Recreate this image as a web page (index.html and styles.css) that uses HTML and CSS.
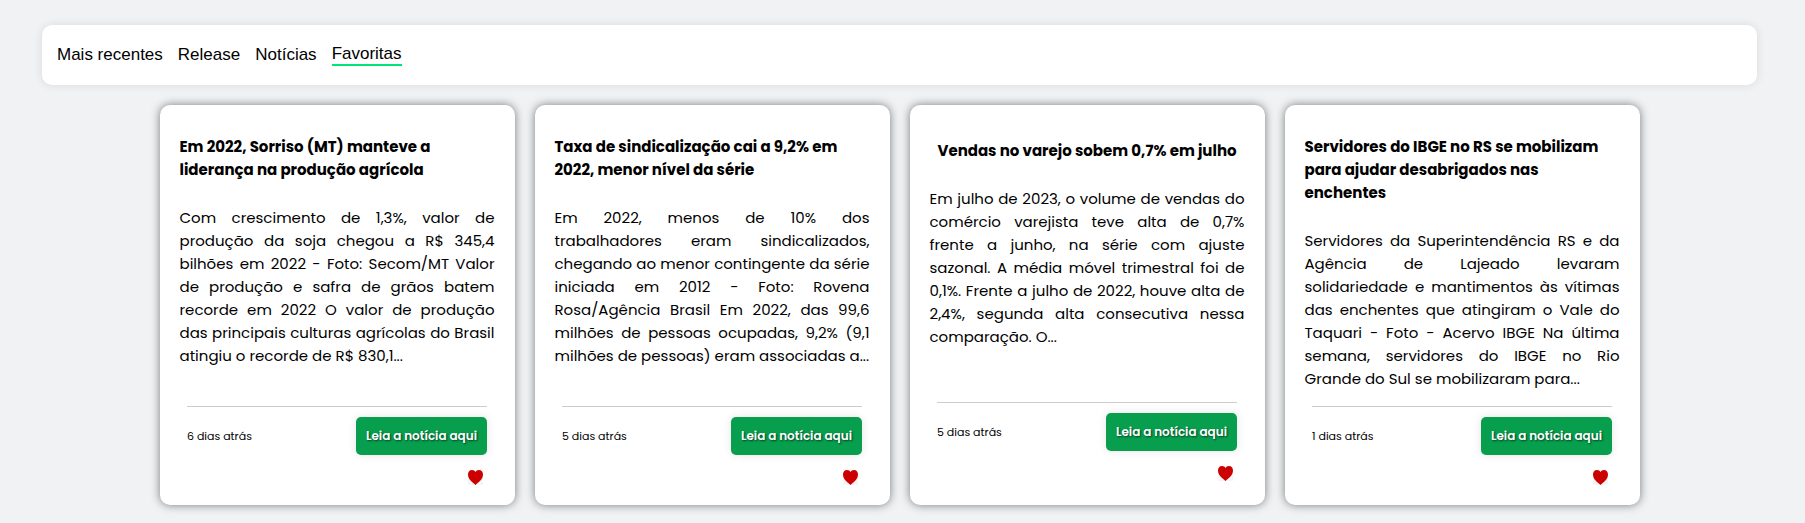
FILE: index.html
```html
<!DOCTYPE html>
<html lang="pt-BR">
<head>
<meta charset="utf-8">
<meta name="viewport" content="width=device-width, initial-scale=1">
<title>Notícias</title>
<link rel="stylesheet" href="styles.css">
</head>
<body>
<svg class="sprite" aria-hidden="true">
  <symbol id="heart" viewBox="0 0 15 15">
    <rect width="15" height="15" fill="#f5f5f5"/>
    <path fill="#c00" d="M7.5 15C5 12.600 0 9.500 0 4.500C0 1.800 1.700 0 4 0C5.600 0 6.900 .8 7.500 2C8.100 .8 9.400 0 11 0C13.300 0 15 1.800 15 4.500C15 9.500 10 12.600 7.500 15Z"/>
  </symbol>
</svg>
<nav class="tabs">
  <a class="tab" href="#">Mais recentes</a>
  <a class="tab" href="#">Release</a>
  <a class="tab" href="#">Notícias</a>
  <a class="tab tab-active" href="#" aria-current="page">Favoritas</a>
</nav>
<main class="cards">
  <article class="card">
    <h2 class="title">Em 2022, Sorriso (MT) manteve a liderança na produção agrícola</h2>
    <p class="text">Com crescimento de 1,3%, valor de produção da soja chegou a R$ 345,4 bilhões em 2022 - Foto: Secom/MT Valor de produção e safra de grãos batem recorde em 2022 O valor de produção das principais culturas agrícolas do Brasil atingiu o recorde de R$ 830,1...</p>
    <footer class="footer">
      <span class="date">6 dias atrás</span>
      <a class="read" href="#">Leia a notícia aqui</a>
      <button class="fav" type="button" aria-label="Remover dos favoritos"><svg class="heart"><use href="#heart"/></svg></button>
    </footer>
  </article>
  <article class="card">
    <h2 class="title">Taxa de sindicalização cai a 9,2% em 2022, menor nível da série</h2>
    <p class="text">Em 2022, menos de 10% dos trabalhadores eram sindicalizados, chegando ao menor contingente da série iniciada em 2012 - Foto: Rovena Rosa/Agência Brasil Em 2022, das 99,6 milhões de pessoas ocupadas, 9,2% (9,1 milhões de pessoas) eram associadas a...</p>
    <footer class="footer">
      <span class="date">5 dias atrás</span>
      <a class="read" href="#">Leia a notícia aqui</a>
      <button class="fav" type="button" aria-label="Remover dos favoritos"><svg class="heart"><use href="#heart"/></svg></button>
    </footer>
  </article>
  <article class="card card-short">
    <h2 class="title">Vendas no varejo sobem 0,7% em julho</h2>
    <p class="text">Em julho de 2023, o volume de vendas do comércio varejista teve alta de 0,7% frente a junho, na série com ajuste sazonal. A média móvel trimestral foi de 0,1%. Frente a julho de 2022, houve alta de 2,4%, segunda alta consecutiva nessa comparação. O...</p>
    <footer class="footer">
      <span class="date">5 dias atrás</span>
      <a class="read" href="#">Leia a notícia aqui</a>
      <button class="fav" type="button" aria-label="Remover dos favoritos"><svg class="heart"><use href="#heart"/></svg></button>
    </footer>
  </article>
  <article class="card">
    <h2 class="title">Servidores do IBGE no RS se mobilizam para ajudar desabrigados nas enchentes</h2>
    <p class="text">Servidores da Superintendência RS e da Agência de Lajeado levaram solidariedade e mantimentos às vítimas das enchentes que atingiram o Vale do Taquari - Foto - Acervo IBGE Na última semana, servidores do IBGE no Rio Grande do Sul se mobilizaram para...</p>
    <footer class="footer">
      <span class="date">1 dias atrás</span>
      <a class="read" href="#">Leia a notícia aqui</a>
      <button class="fav" type="button" aria-label="Remover dos favoritos"><svg class="heart"><use href="#heart"/></svg></button>
    </footer>
  </article>
</main>
</body>
</html>
```

FILE: styles.css
```css
* { box-sizing: border-box; }

body {
  margin: 0;
  padding: 25px 48px 16px 42px;
  background: #f0f2f4;
  color: #000;
  font-family: Poppins, Inter, "Open Sans", sans-serif;
}

.sprite { display: none; }

.tabs {
  display: flex;
  align-items: center;
  gap: 15px;
  min-height: 60px;
  padding: 0 15px;
  border-radius: 10px;
  background: #fff;
  box-shadow: 0 0 10px rgba(0, 0, 0, 0.1);
  font: 17px/20px "Liberation Sans", Arial, sans-serif;
}

.tab { color: #000; text-decoration: none; }
.tab-active { border-bottom: 2px solid #00e676; }

.cards {
  display: flex;
  flex-wrap: wrap;
  justify-content: center;
  gap: 20px;
  margin-top: 20px;
}

.card {
  display: flex;
  flex-direction: column;
  align-items: center;
  width: 355px;
  min-height: 400px;
  padding: 30px 20px 20px;
  border-radius: 10px;
  background: #fff;
  box-shadow: 0 0 10px rgba(0, 0, 0, 0.5);
}

.card-short { padding-top: 34px; padding-bottom: 24px; }

.title {
  margin: 0 0 25px;
  font-size: 15px;
  font-weight: 700;
  line-height: 23px;
}

.text {
  width: 100%;
  margin: 0;
  font-size: 15px;
  line-height: 23px;
  text-align: justify;
}

.footer {
  display: grid;
  grid-template-columns: 1fr auto;
  align-items: center;
  width: 300px;
  margin-top: auto;
  padding-top: 10px;
  border-top: 1px solid #ccc;
}

.date { font-size: 11px; line-height: 16px; }

.read {
  padding: 0 10px;
  border-radius: 5px;
  background: #079f4d;
  box-shadow: 0 0 10px rgba(0, 0, 0, 0.1);
  color: #fff;
  font-size: 12px;
  font-weight: 600;
  line-height: 38px;
  text-decoration: none;
  text-shadow: 1px 1px 2px rgba(0, 0, 0, 0.6);
}

.fav {
  grid-column: 2;
  justify-self: end;
  margin: 15px 4px 0 0;
  padding: 0;
  border: 0;
  background: none;
}

.heart { display: block; width: 15px; height: 15px; }
```
